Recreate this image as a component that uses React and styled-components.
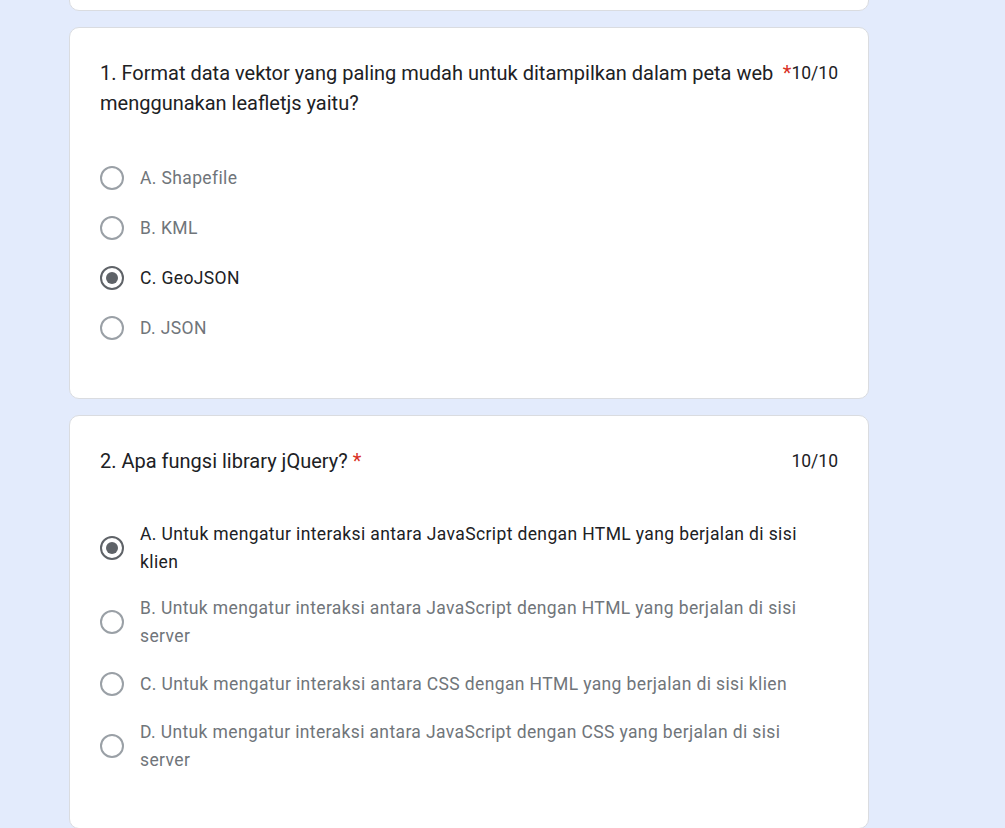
import React from "react";
import styled, { createGlobalStyle } from "styled-components";

const GlobalStyle = createGlobalStyle`
  html, body {
    margin: 0;
    padding: 0;
    background: #e3ebfc;
    font-family: Roboto, "Liberation Sans", Arial, sans-serif;
    overflow: hidden;
  }
`;

const Page = styled.div`
  height: 828px;
  overflow: hidden;
  padding-left: 69px;
`;

const Column = styled.div`
  width: 800px;
  display: flex;
  flex-direction: column;
  gap: 16px;
  margin-top: -40px;
`;

const Card = styled.section`
  box-sizing: border-box;
  background: #fff;
  border: 1px solid #dadce0;
  border-radius: 10px;
  padding: 30px 30px 45px 30px;
  flex: none;
`;

const StubCard = styled(Card)`
  height: 51px;
  padding: 0;
`;

const Header = styled.div`
  display: flex;
  align-items: flex-start;
`;

const Title = styled.div`
  flex: 0 1 auto;
  min-width: 0;
  font-size: 20px;
  line-height: 30px;
  color: #202124;
`;

const Required = styled.span`
  flex: none;
  color: #d93025;
  font-size: 20px;
  line-height: 30px;
  padding-left: 5px;
`;

const Score = styled.div`
  flex: none;
  margin-left: auto;
  font-size: 17.5px;
  line-height: 30px;
  color: #202124;
`;

const Options = styled.div`
  display: flex;
  flex-direction: column;
  margin-top: 35px;
`;

const Option = styled.label`
  box-sizing: border-box;
  display: flex;
  align-items: center;
  gap: 16px;
  min-height: 50px;
  padding: 9px 0;
`;

const Radio = styled.span`
  flex: none;
  box-sizing: border-box;
  width: 24px;
  height: 24px;
  border-radius: 50%;
  border: 2px solid ${(p) => (p.$checked ? "#5f6368" : "#9aa0a6")};
  display: flex;
  align-items: center;
  justify-content: center;
  &::after {
    content: "";
    display: ${(p) => (p.$checked ? "block" : "none")};
    width: 12px;
    height: 12px;
    border-radius: 50%;
    background: #5f6368;
  }
`;

const OptionText = styled.span`
  font-size: 17.5px;
  line-height: 28px;
  letter-spacing: 0.375px;
  color: ${(p) => (p.$checked ? "#202124" : "#70757a")};
  padding-right: 30px;
`;

const questions = [
  {
    title:
      "1. Format data vektor yang paling mudah untuk ditampilkan dalam peta web menggunakan leafletjs yaitu?",
    score: "10/10",
    options: ["A. Shapefile", "B. KML", "C. GeoJSON", "D. JSON"],
    checked: 2,
  },
  {
    title: "2. Apa fungsi library jQuery?",
    score: "10/10",
    options: [
      "A. Untuk mengatur interaksi antara JavaScript dengan HTML yang berjalan di sisi klien",
      "B. Untuk mengatur interaksi antara JavaScript dengan HTML yang berjalan di sisi server",
      "C. Untuk mengatur interaksi antara CSS dengan HTML yang berjalan di sisi klien",
      "D. Untuk mengatur interaksi antara JavaScript dengan CSS yang berjalan di sisi server",
    ],
    checked: 0,
  },
];

export default function App() {
  return (
    <Page>
      <GlobalStyle />
      <Column>
        <StubCard />
        {questions.map((q, i) => (
          <Card key={i}>
            <Header>
              <Title>{q.title}</Title>
              <Required>*</Required>
              <Score>{q.score}</Score>
            </Header>
            <Options>
              {q.options.map((o, j) => (
                <Option key={j}>
                  <Radio $checked={j === q.checked} />
                  <OptionText $checked={j === q.checked}>{o}</OptionText>
                </Option>
              ))}
            </Options>
          </Card>
        ))}
      </Column>
    </Page>
  );
}
